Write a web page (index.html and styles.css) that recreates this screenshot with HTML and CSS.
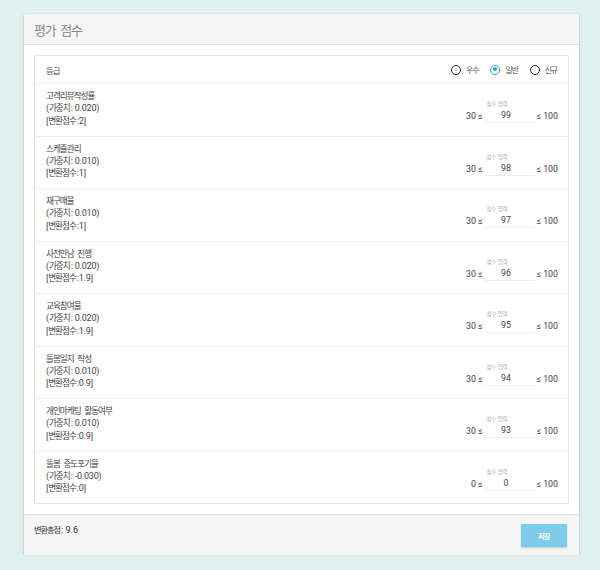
FILE: index.html
```html
<!DOCTYPE html>
<html lang="ko">
<head>
<meta charset="utf-8">
<link rel="stylesheet" href="styles.css">
</head>
<body>
<div class="page">
  <div class="card">
    <div class="card-header"><span class="title">평가 점수</span></div>
    <div class="card-body">
      <div class="box">
        <div class="grade-row">
          <span class="grade-title">등급</span>
          <div class="radios">
            <label class="radio"><span class="circle"></span><span class="rk">우수</span></label>
            <label class="radio"><span class="circle checked"></span><span class="rk">일반</span></label>
            <label class="radio"><span class="circle"></span><span class="rk">신규</span></label>
          </div>
        </div>

        <div class="item">
          <div class="info"><span class="k">고객리뷰작성률</span><br>(<span class="k">가중치</span>: 0.020)<br>[<span class="k">변환점수</span>:2]</div>
          <div class="score"><span class="lbl">점수 입력</span><span class="min">30 ≤</span><span class="input">99</span><span class="max">≤ 100</span></div>
        </div>
        <div class="item">
          <div class="info"><span class="k">스케쥴관리</span><br>(<span class="k">가중치</span>: 0.010)<br>[<span class="k">변환점수</span>:1]</div>
          <div class="score"><span class="lbl">점수 입력</span><span class="min">30 ≤</span><span class="input">98</span><span class="max">≤ 100</span></div>
        </div>
        <div class="item">
          <div class="info"><span class="k">재구매율</span><br>(<span class="k">가중치</span>: 0.010)<br>[<span class="k">변환점수</span>:1]</div>
          <div class="score"><span class="lbl">점수 입력</span><span class="min">30 ≤</span><span class="input">97</span><span class="max">≤ 100</span></div>
        </div>
        <div class="item">
          <div class="info"><span class="k">사전만남 진행</span><br>(<span class="k">가중치</span>: 0.020)<br>[<span class="k">변환점수</span>:1.9]</div>
          <div class="score"><span class="lbl">점수 입력</span><span class="min">30 ≤</span><span class="input">96</span><span class="max">≤ 100</span></div>
        </div>
        <div class="item">
          <div class="info"><span class="k">교육참여율</span><br>(<span class="k">가중치</span>: 0.020)<br>[<span class="k">변환점수</span>:1.9]</div>
          <div class="score"><span class="lbl">점수 입력</span><span class="min">30 ≤</span><span class="input">95</span><span class="max">≤ 100</span></div>
        </div>
        <div class="item">
          <div class="info"><span class="k">돌봄일지 작성</span><br>(<span class="k">가중치</span>: 0.010)<br>[<span class="k">변환점수</span>:0.9]</div>
          <div class="score"><span class="lbl">점수 입력</span><span class="min">30 ≤</span><span class="input">94</span><span class="max">≤ 100</span></div>
        </div>
        <div class="item">
          <div class="info"><span class="k">개인마케팅 활동여부</span><br>(<span class="k">가중치</span>: 0.010)<br>[<span class="k">변환점수</span>:0.9]</div>
          <div class="score"><span class="lbl">점수 입력</span><span class="min">30 ≤</span><span class="input">93</span><span class="max">≤ 100</span></div>
        </div>
        <div class="item">
          <div class="info"><span class="k">돌봄 중도포기율</span><br>(<span class="k">가중치</span>: -0.030)<br>[<span class="k">변환점수</span>:0]</div>
          <div class="score"><span class="lbl">점수 입력</span><span class="min">0 ≤</span><span class="input">0</span><span class="max">≤ 100</span></div>
        </div>
      </div>
    </div>
    <div class="card-footer">
      <span class="total"><span class="fk">변환총점</span>: 9.6</span>
      <button class="save">저장</button>
    </div>
  </div>
</div>
</body>
</html>
```
FILE: styles.css
```css
html, body {
  margin: 0;
  padding: 0;
  background: #e0f0ef;
  font-family: Roboto, "Noto Sans CJK KR", sans-serif;
  color: #444;
}
.page {
  padding: 14px 0 0 24px;
}
.card {
  width: 555px;
  background: #fff;
  border-radius: 2px;
  box-shadow: 0 1px 3px rgba(0, 0, 0, 0.28);
  overflow: hidden;
}
.card-header {
  height: 30px;
  background: #f5f5f5;
  border-bottom: 1px solid #e2e2e2;
  padding: 0 10px;
  display: flex;
  align-items: center;
}
.title {
  font-size: 13px;
  letter-spacing: -1.3px;
  word-spacing: 3px;
  color: #888;
}
.card-body {
  padding: 10px;
}
.box {
  border: 1px solid #e6e6e6;
}
.grade-row {
  height: 27px;
  display: flex;
  align-items: center;
  justify-content: space-between;
  padding: 0 11px 0 11px;
}
.grade-title {
  font-size: 8.5px;
  letter-spacing: -1px;
  color: #555;
}
.radios {
  display: flex;
  gap: 12px;
}
.radio {
  display: flex;
  align-items: center;
  gap: 5px;
}
.rk {
  font-size: 8px;
  letter-spacing: -1.2px;
  color: #555;
}
.circle {
  width: 10px;
  height: 10px;
  box-sizing: border-box;
  border: 1.5px solid #2a2a2a;
  border-radius: 50%;
  display: inline-block;
  position: relative;
}
.circle.checked {
  border-color: #26a9c9;
}
.circle.checked::after {
  content: "";
  position: absolute;
  left: 1.5px;
  top: 1.5px;
  width: 4px;
  height: 4px;
  border-radius: 50%;
  background: #26a9c9;
}
.item {
  height: 52.5px;
  box-sizing: border-box;
  border-top: 1px solid #ececec;
  display: flex;
  justify-content: space-between;
  align-items: flex-start;
  padding: 0 10px 0 11px;
}
.info {
  padding-top: 6px;
  font-size: 9px;
  line-height: 12.3px;
  letter-spacing: -0.2px;
  color: #444;
}
.k {
  font-size: 8.6px;
  letter-spacing: -1px;
  word-spacing: 2.5px;
  padding-right: 1px;
}
.score {
  margin-top: 16px;
  display: grid;
  grid-template-columns: auto 50px auto;
  column-gap: 2px;
  align-items: end;
  font-size: 8.8px;
  color: #444;
}
.lbl {
  grid-column: 2;
  grid-row: 1;
  font-size: 5.5px;
  letter-spacing: -0.4px;
  word-spacing: 1px;
  color: #aaa;
  line-height: 8px;
  padding-left: 2px;
}
.min {
  grid-column: 1;
  grid-row: 2;
  text-align: right;
  line-height: 14px;
}
.input {
  grid-column: 2;
  grid-row: 2;
  text-align: center;
  line-height: 14px;
  border-bottom: 1px solid #ececec;
  padding-right: 7px;
}
.max {
  grid-column: 3;
  grid-row: 2;
  line-height: 14px;
}
.card-footer {
  height: 41px;
  box-sizing: border-box;
  background: #f5f5f5;
  border-top: 1px solid #e3e3e3;
  padding: 8px 12px 0 10px;
  display: flex;
  justify-content: space-between;
  align-items: flex-start;
}
.total {
  font-size: 9px;
  color: #333;
  line-height: 14px;
}
.fk {
  font-size: 8.2px;
  letter-spacing: -1px;
  padding-right: 1px;
}
.save {
  width: 46px;
  height: 23px;
  margin-top: 1px;
  border: none;
  border-radius: 1px;
  background: #7dcbe8;
  color: #fff;
  font-family: Roboto, "Noto Sans CJK KR", sans-serif;
  font-size: 7px;
  letter-spacing: -0.8px;
  font-weight: bold;
  box-shadow: 0 1px 2px rgba(0, 0, 0, 0.2);
  padding: 0;
}
```
